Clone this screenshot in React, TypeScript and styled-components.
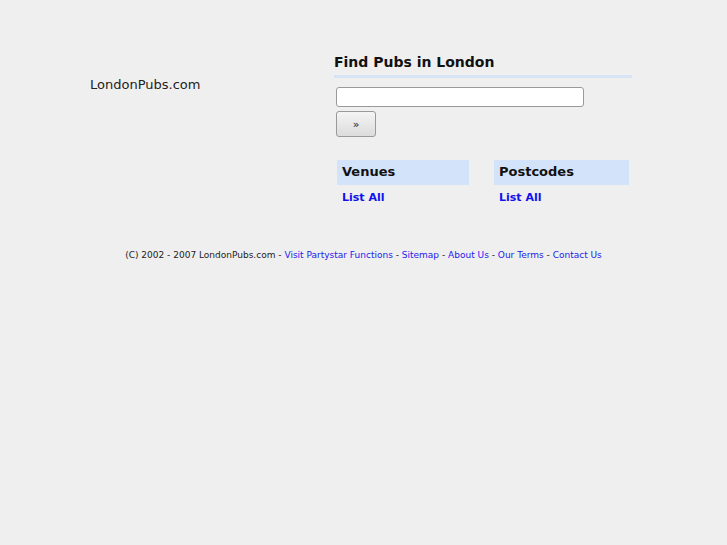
import React from "react";
import styled, { createGlobalStyle } from "styled-components";

const Global = createGlobalStyle`
  html, body { margin: 0; padding: 0; background: #efefef; }
  body { font-family: "DejaVu Sans", Verdana, sans-serif; color: #111; }
`;

const Page = styled.div`
  width: 727px;
  height: 545px;
  display: flex;
  flex-direction: column;
`;

const Top = styled.div`
  display: flex;
  padding-top: 52px;
`;

const Brand = styled.div`
  width: 244px;
  padding-left: 90px;
  padding-top: 24px;
  font-size: 13px;
  line-height: 17px;
  color: #222;
`;

const Search = styled.div`
  width: 298px;
  display: flex;
  flex-direction: column;
`;

const Title = styled.h1`
  margin: 0;
  font-size: 14px;
  font-weight: bold;
  line-height: 20px;
  padding-bottom: 3px;
  border-bottom: 3px solid #d7e4f3;
  color: #111;
`;

const Input = styled.input`
  margin: 9px 0 0 2px;
  box-sizing: border-box;
  width: 248px;
  height: 20px;
  border: 1px solid #999;
  border-radius: 3px;
  background: #fff;
`;

const Btn = styled.button`
  margin: 4px 0 0 2px;
  width: 40px;
  height: 26px;
  box-sizing: border-box;
  border: 1px solid #999;
  border-radius: 3px;
  background: linear-gradient(#f4f4f4, #dcdcdc);
  font-family: "DejaVu Sans", sans-serif;
  font-size: 11px;
  color: #222;
  padding: 0;
`;

const Cols = styled.div`
  display: flex;
  margin-top: 23px;
  padding-left: 3px;
  gap: 25px;
`;

const Col = styled.div<{ $w: number }>`
  width: ${(p) => p.$w}px;
`;

const ColHead = styled.div`
  background: #d3e3fa;
  height: 25px;
  line-height: 23px;
  padding-left: 5px;
  padding-bottom: 2px;
  box-sizing: border-box;
  font-size: 13px;
  font-weight: 600;
  color: #111;
`;

const ListLink = styled.a`
  display: block;
  padding-left: 5px;
  margin-top: 6px;
  font-size: 11px;
  font-weight: bold;
  color: #1111ee;
  text-decoration: none;
`;

const Footer = styled.div`
  margin-top: 46px;
  text-align: center;
  font-size: 9px;
  color: #222;
`;

const FLink = styled.a`
  color: #2222ee;
  text-decoration: none;
`;

export default function App() {
  return (
    <Page>
      <Global />
      <Top>
        <Brand>LondonPubs.com</Brand>
        <Search>
          <Title>Find Pubs in London</Title>
          <Input type="text" />
          <Btn>»</Btn>
          <Cols>
            <Col $w={132}>
              <ColHead>Venues</ColHead>
              <ListLink href="#">List All</ListLink>
            </Col>
            <Col $w={135}>
              <ColHead>Postcodes</ColHead>
              <ListLink href="#">List All</ListLink>
            </Col>
          </Cols>
        </Search>
      </Top>
      <Footer>
        (C) 2002 - 2007 LondonPubs.com - <FLink href="#">Visit Partystar Functions</FLink> -{" "}
        <FLink href="#">Sitemap</FLink> - <FLink href="#">About Us</FLink> -{" "}
        <FLink href="#">Our Terms</FLink> - <FLink href="#">Contact Us</FLink>
      </Footer>
    </Page>
  );
}
